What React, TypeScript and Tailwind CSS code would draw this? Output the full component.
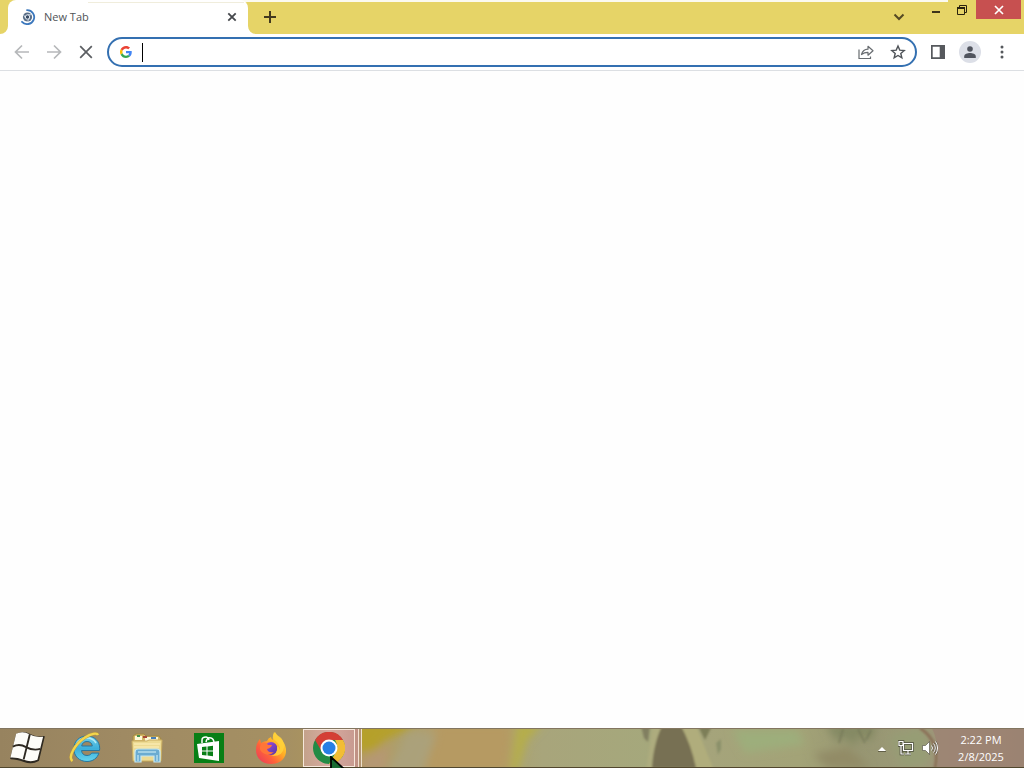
import type { ReactNode } from "react";

function IconButton({ label, className = "", children }: { label: string; className?: string; children: ReactNode }) {
  return (
    <button type="button" aria-label={label} className={`flex shrink-0 items-center justify-center ${className}`}>
      {children}
    </button>
  );
}

function LoadingFavicon() {
  return (
    <svg width="16" height="16" viewBox="0 0 16 16" fill="none" aria-hidden="true">
      <circle cx="7.5" cy="8" r="4.6" fill="#5a6e87" />
      <circle cx="7.5" cy="8" r="2.2" fill="#3b4d66" stroke="#e7edf4" strokeWidth="1" />
      <path d="M7.500 5.700h4M5.600 9.200l-2-3.300M9.500 9.200l-2 3.200" stroke="#dce5ee" strokeWidth=".8" />
      <path d="M7 1.100A7 7 0 1 1 2 12.800" stroke="#3c78bd" strokeWidth="1.800" strokeLinecap="round" />
    </svg>
  );
}

function GoogleMark() {
  return (
    <svg width="12" height="12" viewBox="0 0 48 48" aria-hidden="true">
      <path fill="#EA4335" d="M24 9.5c3.5 0 6.7 1.2 9.2 3.6l6.9-6.9C35.9 2.4 30.5 0 24 0 14.6 0 6.5 5.4 2.6 13.2l8 6.2C12.4 13.7 17.7 9.5 24 9.5z" />
      <path fill="#4285F4" d="M47 24.6c0-1.6-.2-3.1-.4-4.6H24v9h12.900c-.6 3-2.200 5.500-4.700 7.200l7.700 6C44.400 38 47 31.800 47 24.600z" />
      <path fill="#FBBC05" d="M10.500 28.600a14.500 14.500 0 0 1 0-9.200l-8-6.200a24 24 0 0 0 0 21.600l8-6.200z" />
      <path fill="#34A853" d="M24 48c6.500 0 11.900-2.100 15.900-5.800l-7.700-6c-2.200 1.500-4.900 2.300-8.200 2.300-6.300 0-11.600-4.200-13.500-9.900l-8 6.200C6.500 42.600 14.600 48 24 48z" />
    </svg>
  );
}

function TabStrip() {
  return (
    <header className="flex h-[34px] shrink-0 bg-[#e6d467]">
      <div className="relative flex min-w-0 flex-1">
        <div className="absolute top-0 -right-6 left-20 h-0.5 bg-[#fbfaf0]" />
        <div className="relative ml-2 flex w-60 shrink-0 items-center rounded-t-lg bg-white pr-2 pl-3">
          <svg className="absolute bottom-0 -left-2" width="8" height="8" aria-hidden="true">
            <path d="M8 0v8H0a8 8 0 0 0 8-8z" fill="#fff" />
          </svg>
          <svg className="absolute -right-2 bottom-0" width="8" height="8" aria-hidden="true">
            <path d="M0 0v8h8A8 8 0 0 1 0 0z" fill="#fff" />
          </svg>
          <div className="absolute top-0.5 right-1 left-20 h-px bg-[#f0eddc]" />
          <LoadingFavicon />
          <span className="ml-2 flex-1 text-[11px] text-[#505357]">New Tab</span>
          <IconButton label="Close tab" className="size-4">
            <svg width="10" height="10" viewBox="0 0 10 10" stroke="#45484c" strokeWidth="1.8" aria-hidden="true">
              <path d="M1.300 1.300l7.400 7.400M8.700 1.300L1.300 8.700" />
            </svg>
          </IconButton>
        </div>
        <IconButton label="New tab" className="ml-2 w-7">
          <svg width="14" height="14" viewBox="0 0 14 14" stroke="#42391e" strokeWidth="2" aria-hidden="true">
            <path d="M7 1v12M1 7h12" />
          </svg>
        </IconButton>
        <IconButton label="Search tabs" className="mr-[13px] ml-auto w-6">
          <svg width="12" height="12" viewBox="0 0 12 12" fill="none" stroke="#554a24" strokeWidth="2" aria-hidden="true">
            <path d="M1.500 3.500L6 8l4.500-4.500" />
          </svg>
        </IconButton>
      </div>
      <div className="flex h-[19px] shrink-0 pr-[3px]">
        <IconButton label="Minimize" className="w-6">
          <svg width="8" height="12" viewBox="0 0 8 12" aria-hidden="true">
            <path d="M0 7h8v2H0z" fill="#3d341a" />
          </svg>
        </IconButton>
        <IconButton label="Restore" className="w-7">
          <svg width="12" height="12" viewBox="0 0 12 12" fill="none" stroke="#29220e" aria-hidden="true">
            <path d="M3.500 3.500v-2h7V8.500H9" />
            <path d="M1.500 4.500h7v6h-7z" />
            <path d="M1 4h8" strokeWidth="2" />
          </svg>
        </IconButton>
        <IconButton label="Close" className="w-[45px] bg-[#c75050]">
          <svg width="10" height="10" viewBox="0 0 10 10" stroke="#fff" strokeWidth="1.700" aria-hidden="true">
            <path d="M1 1l8 8M9 1L1 9" />
          </svg>
        </IconButton>
      </div>
    </header>
  );
}

function Toolbar() {
  return (
    <div className="flex h-[37px] shrink-0 items-center border-b border-[#dcdfe3] bg-white px-3">
      <div className="flex gap-3">
        <IconButton label="Back" className="size-5">
          <svg width="16" height="16" viewBox="0 0 16 16" fill="none" stroke="#b6b8ba" strokeWidth="1.700" aria-hidden="true">
            <path d="M15 8H2M8 1.500L1.500 8 8 14.500" />
          </svg>
        </IconButton>
        <IconButton label="Forward" className="size-5">
          <svg width="16" height="16" viewBox="0 0 16 16" fill="none" stroke="#b6b8ba" strokeWidth="1.700" aria-hidden="true">
            <path d="M1 8h13M8 1.500L14.500 8 8 14.500" />
          </svg>
        </IconButton>
        <IconButton label="Stop loading" className="size-5">
          <svg width="14" height="14" viewBox="0 0 14 14" stroke="#5b5e62" strokeWidth="1.700" aria-hidden="true">
            <path d="M1.200 1.200l11.600 11.600M12.800 1.200L1.200 12.800" />
          </svg>
        </IconButton>
      </div>
      <div className="ml-[11px] flex h-[30px] min-w-0 flex-1 items-center rounded-full border-2 border-[#3470b1] bg-white pr-[7px] pl-[11px]">
        <GoogleMark />
        <span className="ml-2.5 h-[19px] w-px shrink-0 bg-black" aria-hidden="true" />
        <input aria-label="Address and search bar" type="text" className="min-w-0 flex-1 bg-transparent px-1 text-sm caret-transparent outline-none" />
        <IconButton label="Share" className="size-5">
          <svg width="16" height="16" viewBox="0 0 16 16" fill="none" stroke="#686c70" strokeWidth="1.200" aria-hidden="true">
            <path d="M1 5.500V14.500H12.500V12.500" />
            <path d="M3.500 10.500C4.500 7 6.500 5.300 10 5.200V2.300L15 6.800l-5 4.400V8.400C7.300 8.300 5.500 9 3.500 10.500z" strokeLinejoin="round" />
          </svg>
        </IconButton>
        <IconButton label="Bookmark this tab" className="ml-3 size-5">
          <svg width="16" height="16" viewBox="0 0 16 16" fill="none" stroke="#4f5358" strokeWidth="1.400" strokeLinejoin="miter" aria-hidden="true">
            <path d="M8 2l1.750 4.100 4.450.400-3.400 2.900 1.050 4.350L8 11.450l-3.850 2.300L5.200 9.400 1.800 6.500l4.450-.400z" />
          </svg>
        </IconButton>
      </div>
      <IconButton label="Side panel" className="ml-[11px] size-5">
        <svg width="14" height="14" viewBox="0 0 14 14" aria-hidden="true">
          <path fill="#56595d" fillRule="evenodd" d="M0 0h14v14H0zM1.700 1.700v10.600h7V1.700z" />
        </svg>
      </IconButton>
      <IconButton label="Profile" className="ml-[11px] size-[22px] rounded-full bg-[#dcdfe7]">
        <svg width="14" height="14" viewBox="0 0 14 14" fill="#50545e" aria-hidden="true">
          <circle cx="7" cy="4" r="2.800" />
          <path d="M1.200 13v-1.600c0-2.200 3.400-3.300 5.800-3.300s5.800 1.100 5.800 3.300V13z" />
        </svg>
      </IconButton>
      <IconButton label="Customize and control" className="ml-[11px] size-5">
        <svg width="4" height="14" viewBox="0 0 4 14" fill="#55585c" aria-hidden="true">
          <circle cx="2" cy="2" r="1.500" />
          <circle cx="2" cy="7" r="1.500" />
          <circle cx="2" cy="12" r="1.500" />
        </svg>
      </IconButton>
    </div>
  );
}

function Wallpaper() {
  return (
    <svg className="absolute inset-0 size-full" viewBox="0 0 1024 40" preserveAspectRatio="none" aria-hidden="true">
      <defs>
        <linearGradient id="wall">
          <stop offset="0" stopColor="#97835f" />
          <stop offset=".12" stopColor="#9f8a63" />
          <stop offset=".28" stopColor="#a59063" />
          <stop offset=".36" stopColor="#b49b56" />
          <stop offset=".4" stopColor="#aaa076" />
          <stop offset=".43" stopColor="#b59c65" />
          <stop offset=".49" stopColor="#aca370" />
          <stop offset=".53" stopColor="#a8a57b" />
          <stop offset=".64" stopColor="#a5a87c" />
          <stop offset=".69" stopColor="#a5a47b" />
          <stop offset=".78" stopColor="#a3a377" />
          <stop offset=".84" stopColor="#979672" />
          <stop offset=".9" stopColor="#9c9a78" />
          <stop offset=".94" stopColor="#a08977" />
          <stop offset="1" stopColor="#97836f" />
        </linearGradient>
        <filter id="soft" x="-10%" y="-20%" width="120%" height="140%">
          <feGaussianBlur stdDeviation="4" />
        </filter>
        <filter id="edge" x="-10%" y="-20%" width="120%" height="140%">
          <feGaussianBlur stdDeviation="1" />
        </filter>
      </defs>
      <rect width="1024" height="40" fill="url(#wall)" />
      <g filter="url(#soft)">
        <path d="M355-6h70l-40 18-12 11h-18z" fill="#b5a029" />
        <path d="M360 30l30-13-5 28h-25z" fill="#b59873" />
        <path d="M412 4l24 2-14 38h-37z" fill="#aba17a" />
        <path d="M439-4h74l-5 48h-84l9-26z" fill="#b69a62" />
        <path d="M517-4h26l-16 16-10 32h-7z" fill="#b6ae49" />
        <path d="M732 2h65l8 14-60 9z" fill="#9dae7c" />
        <path d="M825-4h52l-6 18-10-8-7 12-10-9-7 5z" fill="#848963" />
        <path d="M813 26l35-7 22 21h-42z" fill="#928b66" />
        <path d="M889 8l35-8 6 34-28 6z" fill="#969d74" />
      </g>
      <g filter="url(#edge)">
        <path d="M682-2h14q8 20 18 44h-18z" fill="#b0ad7b" />
        <path d="M653-2h9q-4 22-8 44h-8z" fill="#adac7e" />
        <path d="M698-2h14l-7 14z" fill="#7d7e58" />
        <path d="M716 15l5-4v10l-3 6z" fill="#8b916b" />
        <path d="M641-2h9l-2 16-4-4z" fill="#817f61" />
        <path d="M662-2h19c7 13 12 27 15 42h-44c1-16 4-29 10-42z" fill="#777052" />
        <path d="M843 1l-4 14M858 1l7 14M871 2l-5 10" fill="none" stroke="#6f7354" strokeWidth="2" opacity=".6" />
        <path d="M920 0q21 14 15 40" fill="none" stroke="#8b7159" strokeWidth="3" />
      </g>
      <path d="M932 0h92v40h-87q4-20-5-40z" fill="#9c8373" opacity=".8" />
      <path d="M0 .500h1024" stroke="#827560" />
      <path d="M0 39.500h1024" stroke="#51472e" />
    </svg>
  );
}

function WindowsMark() {
  return (
    <svg width="36" height="38" viewBox="7 0 38 40" aria-hidden="true">
      <path d="M15 6q7-4 14 0t15 2l-6 25q-7 4-15 1T9 31z" fill="#2e2921" stroke="#2e2921" strokeWidth="1.500" strokeLinejoin="round" />
      <path d="M14.500 5q7-3.500 14 .5T43 8l-6 24.500q-7 3-14.500 0T8.500 30z" fill="#fdfcf8" />
      <path d="M29 5.500L22.500 32M11 18.500q7-3.500 14 .5t15 2" fill="none" stroke="#2e2921" strokeWidth="2" />
    </svg>
  );
}

function ExplorerMark() {
  return (
    <svg width="34" height="34" viewBox="0 0 34 34" aria-hidden="true">
      <defs>
        <linearGradient id="ie" x1="0" y1="0" x2="0" y2="1">
          <stop stopColor="#72d0ea" />
          <stop offset=".5" stopColor="#3cafd9" />
          <stop offset="1" stopColor="#64d4ee" />
        </linearGradient>
      </defs>
      <path fillRule="evenodd" d="M31.500 19.500H13.500c.3 3.100 2.300 5 5.500 5 2.200 0 3.700-.8 4.700-2.400h7.200C29.300 27.300 24.800 30.500 19 30.500c-7.700 0-13.200-5.400-13.200-12.800S11.300 5 19 5c7.400 0 12.700 5.300 12.700 12.400zM13.700 15h10.600c-.4-2.900-2.300-4.500-5.300-4.500-2.900 0-4.800 1.600-5.300 4.500z" fill="url(#ie)" stroke="#27779f" strokeWidth="1" />
      <path d="M8.500 13q3-6 10.500-6 6 0 9 5" fill="none" stroke="#b2ebf5" strokeWidth="1.500" />
      <path d="M4.500 30C-.5 26 7 13 17 6.500 23 2.500 29 1.500 30 4" fill="none" stroke="#b49443" strokeWidth="3.200" />
      <path d="M4.500 30C-.5 26 7 13 17 6.500 23 2.500 29 1.500 30 4" fill="none" stroke="#f2d64c" strokeWidth="2.300" />
    </svg>
  );
}

function FolderMark() {
  return (
    <svg width="34" height="32" viewBox="0 0 34 32" aria-hidden="true">
      <path d="M3 4l3-2h8l2 2h13l2 3v22H3z" fill="#d4b666" stroke="#a08743" />
      <path d="M5 4h7v4H5zM15 5h13v4H15z" fill="#fff9d8" />
      <path d="M7 4h3" stroke="#46924e" strokeWidth="2" />
      <path d="M13 5h4" stroke="#a64739" strokeWidth="2" />
      <path d="M21 6h5" stroke="#487eb7" strokeWidth="2" />
      <path d="M2 9h15l2-1h13l-1 21H3z" fill="#eddb93" stroke="#c9ad62" />
      <path d="M4 12h26M4 15h25" stroke="#fff1bd" />
      <path d="M5 30V20q0-3 3-3h19q3 0 3 3v10h-6v-6H11v6z" fill="#6bacd1" stroke="#c6e8f2" strokeWidth="1.200" />
      <path d="M8 20h18M8 23v6M27 23v6" stroke="#b5ddeb" strokeWidth="1.500" />
    </svg>
  );
}

function StoreMark() {
  return (
    <svg width="30" height="30" viewBox="0 0 30 30" aria-hidden="true">
      <path d="M0 0h30v30H0z" fill="#087f16" />
      <path d="M8 10V7q0-3 4-3 2 0 3 3M12 9q1-5 5-4 3 1 3 5" fill="none" stroke="#fff" strokeWidth="1.500" />
      <path d="M3 11l22-3v20L5 25z" fill="#fff" />
      <path d="M8 14l4.500-.500v4H8zM13.500 13.400l5.500-.600v4.700h-5.500zM8 18.500h4.500v4L8 22zM13.500 18.500H19v4.700l-5.500-.600z" fill="#087f16" />
    </svg>
  );
}

function FirefoxMark() {
  return (
    <svg width="32" height="32" viewBox="0 0 32 32" aria-hidden="true">
      <defs>
        <linearGradient id="fire" x1="1" y1="0" x2="0" y2="1">
          <stop stopColor="#fff143" />
          <stop offset=".400" stopColor="#ffad25" />
          <stop offset=".650" stopColor="#ff6339" />
          <stop offset="1" stopColor="#e63361" />
        </linearGradient>
        <linearGradient id="globe" x1="0" y1="0" x2="1" y2="1">
          <stop stopColor="#a34edb" />
          <stop offset="1" stopColor="#5136a6" />
        </linearGradient>
      </defs>
      <path d="M5 7l1 4q3-2 6-2 1-3 4-4 0 2 2 3-1-5 2-8 2 4 6 7 4 4 5 10c1 9-6 15-15 15S1 26 1 18q0-7 4-11z" fill="url(#fire)" />
      <circle cx="16" cy="16.500" r="6.500" fill="url(#globe)" />
      <path d="M6 12q5-3 7 1h4q-1 3-5 4 1 4 7 3-5 5-11 1Q3 18 6 12z" fill="#ff7538" />
      <path d="M19 0q-3 7 3 10 3 3 3 8-1-3-3-4 1 8-6 10 12 1 13-9 0-7-4-10-5-3-6-5z" fill="#ffd13b" opacity=".85" />
    </svg>
  );
}

function ChromeMark() {
  return (
    <svg width="32" height="32" viewBox="0 0 32 32" aria-hidden="true">
      <circle cx="16" cy="16" r="16" fill="#238b45" />
      <path d="M2.100 8A16 16 0 0 1 30 8H16a8 8 0 0 0-7 12z" fill="#d43f36" />
      <path d="M30 8A16 16 0 0 1 16 32l7-12q3-6-1-12z" fill="#f2bd35" />
      <circle cx="16" cy="16" r="8.500" fill="#fff" />
      <circle cx="16" cy="16" r="6.500" fill="#277fe5" />
    </svg>
  );
}

function Taskbar() {
  return (
    <footer className="relative flex h-10 shrink-0 overflow-hidden bg-[#a38c60]">
      <Wallpaper />
      <nav aria-label="Taskbar" className="relative flex shrink-0">
        <IconButton label="Start" className="w-[54px]"><WindowsMark /></IconButton>
        <IconButton label="Internet Explorer" className="w-[62px]"><ExplorerMark /></IconButton>
        <IconButton label="File Explorer" className="w-[62px]"><FolderMark /></IconButton>
        <IconButton label="Store" className="w-[62px]"><StoreMark /></IconButton>
        <IconButton label="Firefox" className="w-[62px]"><FirefoxMark /></IconButton>
        <div className="relative ml-px flex h-full w-[60px] py-px">
          <IconButton label="Google Chrome" className="w-[52px] border border-[#f6e7da] bg-linear-to-r from-[#c4a28b] via-[#d7aaa0] to-[#c89b91]"><ChromeMark /></IconButton>
          <span className="w-1 border-r border-[#f3e1d2] bg-[#c09285]" />
          <span className="w-[3px] border-r border-[#eee0cc] bg-[#b29372]" />
          <svg className="pointer-events-none absolute top-7 left-[27px]" width="14" height="20" viewBox="0 0 14 20" aria-hidden="true">
            <path d="M1 1v17l4-4 3 7 3-2-3-6h6z" fill="#176b31" stroke="#020402" strokeWidth="1.800" />
          </svg>
        </div>
      </nav>
      <div className="relative ml-auto flex shrink-0 items-center">
        <IconButton label="Show hidden icons" className="mr-2 size-4">
          <svg width="8" height="7" viewBox="0 0 8 7" aria-hidden="true"><path d="M4 2l4 4H0z" fill="#fff" /><path d="M0 6.500h8" stroke="#625f47" /></svg>
        </IconButton>
        <IconButton label="Network" className="mr-2 size-4">
          <svg width="16" height="16" viewBox="0 0 16 16" fill="none" aria-hidden="true">
            <path d="M5.500 3.500h9v7h-9zM10 11v3M7 14h6M1 1.500h4v4H1zM3 6v8h3" stroke="#36362a" strokeWidth="2.600" opacity=".8" />
            <path d="M5.500 3.500h9v7h-9zM10 11v3M7 14h6M1 1.500h4v4H1zM3 6v8h3" stroke="#fff" strokeWidth="1.200" />
          </svg>
        </IconButton>
        <IconButton label="Volume" className="mr-4 size-4">
          <svg width="16" height="16" viewBox="0 0 16 16" fill="none" aria-hidden="true">
            <path d="M.5 5.500h3l4-4v13l-4-4h-3z" fill="#fff" stroke="#49463a" strokeWidth=".6" />
            <path d="M9.500 5.500q2 2.500 0 5M11.500 3.500q3.500 4.500 0 9M13.500 1.500q4 6.500 0 13" stroke="#484237" strokeWidth="2" opacity=".6" />
            <path d="M9.500 5.500q2 2.500 0 5M11.500 3.500q3.500 4.500 0 9M13.500 1.500q4 6.500 0 13" stroke="#fff" />
          </svg>
        </IconButton>
        <time dateTime="2025-02-08T14:22" className="mr-4 flex w-[54px] flex-col items-center text-[11px] leading-[17px] whitespace-nowrap text-white">
          <span>2:22 PM</span>
          <span>2/8/2025</span>
        </time>
      </div>
    </footer>
  );
}

export default function App() {
  return (
    <div className="flex min-h-screen flex-col bg-[#fefefe] font-['Open_Sans',sans-serif]">
      <TabStrip />
      <Toolbar />
      <main aria-label="New Tab" className="flex-1" />
      <Taskbar />
    </div>
  );
}
